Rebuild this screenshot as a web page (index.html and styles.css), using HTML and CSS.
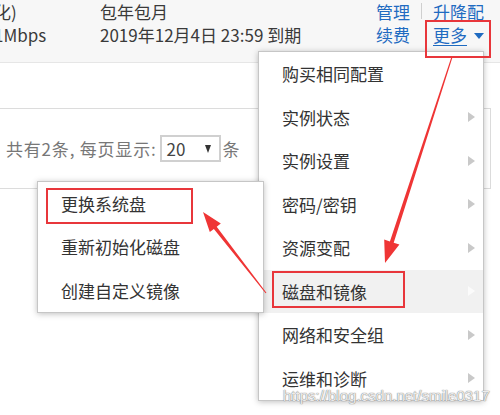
FILE: index.html
```html
<!DOCTYPE html>
<html lang="zh-CN">
<head>
<meta charset="utf-8">
<title>更多菜单</title>
<link rel="stylesheet" href="styles.css">
</head>
<body>
<div class="page">
  <div class="row">
    <div class="cell c1"><div class="clip">化)</div><div class="clip">1Mbps</div></div>
    <div class="cell c2"><div>包年包月</div><div>2019年12月4日 23:59 到期</div></div>
    <div class="cell c3"><a class="link">管理</a><a class="link">续费</a></div>
    <div class="sep"></div>
    <div class="cell c4"><a class="link">升降配</a><div class="morebox"><a class="link more">更多</a><span class="caret"></span></div></div>
  </div>
  <div class="blank"></div>
  <div class="pager">
    <span class="ptext">共有2条, 每页显示:</span>
    <span class="select"><span class="sval">20</span><span class="stri"></span></span>
    <span class="ptext">条</span>
  </div>
</div>

<ul class="menu main">
  <li class="item"><span>购买相同配置</span></li>
  <li class="item"><span>实例状态</span><i class="arr"></i></li>
  <li class="item"><span>实例设置</span><i class="arr"></i></li>
  <li class="item"><span>密码/密钥</span><i class="arr"></i></li>
  <li class="item"><span>资源变配</span><i class="arr"></i></li>
  <li class="item hover"><span>磁盘和镜像</span><i class="arr"></i><b class="mark mark-disk"></b></li>
  <li class="item"><span>网络和安全组</span><i class="arr"></i></li>
  <li class="item"><span>运维和诊断</span><i class="arr"></i></li>
</ul>

<ul class="menu sub">
  <li class="item"><span>更换系统盘</span><b class="mark mark-sys"></b></li>
  <li class="item"><span>重新初始化磁盘</span></li>
  <li class="item"><span>创建自定义镜像</span></li>
</ul>

<div class="mark mark-more"></div>

<svg class="arrows" width="500" height="415" viewBox="0 0 500 415">
  <polygon points="451.5,56.85 452.5,57.15 393.7,242.7 399.4,244.6 385,263 384.2,239.6 389.9,241.5" />
  <polygon points="265.6,293.3 266.4,292.7 216.7,226.7 220.8,223.5 203,212 209.8,232.1 213.9,228.9" />
</svg>

<div class="watermark">https://blog.csdn.net/smile0317</div>
</body>
</html>
```

FILE: styles.css
```css
* { box-sizing: border-box; }
html, body {
  margin: 0;
  padding: 0;
}
body {
  width: 500px;
  height: 415px;
  overflow: hidden;
  position: relative;
  background: #fff;
  font-family: "Noto Sans CJK SC", "Noto Sans", sans-serif;
  font-size: 17px;
  color: #3a3a3a;
}
.page {
  display: flex;
  flex-direction: column;
}
.row {
  display: flex;
  height: 63px;
  background: #f7f7f7;
  border-bottom: 1px solid #e6e6e6;
  line-height: 23px;
}
.cell {
  display: flex;
  flex-direction: column;
  white-space: nowrap;
}
.c1 { width: 100px; }
.clip { margin-left: -6px; }
.c2 { width: 276px; }
.c3 { width: 45px; }
.sep {
  width: 1px;
  height: 16px;
  margin-top: 3px;
  margin-right: 11px;
  background: #cfcfcf;
}
.c4 { flex: 1; }
.link {
  color: #1f6bc1;
  text-decoration: none;
}
.morebox {
  display: flex;
  align-items: center;
}
.more {
  text-decoration: underline;
  text-underline-offset: 3px;
}
.caret {
  width: 0;
  height: 0;
  margin-left: 7px;
  margin-top: 2px;
  border-left: 5px solid transparent;
  border-right: 5px solid transparent;
  border-top: 6px solid #1f6bc1;
}
.blank { height: 45px; }
.pager {
  width: 491px;
  height: 81px;
  border-top: 1px solid #dcdcdc;
  border-right: 1px solid #dcdcdc;
  border-bottom: 1px solid #dcdcdc;
  display: flex;
  align-items: center;
  padding-left: 6px;
  font-size: 17px;
  color: #777;
}
.ptext { letter-spacing: 0.8px; }
.select {
  display: flex;
  align-items: center;
  width: 61px;
  height: 27px;
  margin-left: 3px;
  margin-right: 2px;
  border: 2px solid #d0d0d0;
  padding-left: 5px;
  color: #444;
}
.sval { width: 38px; }
.stri {
  width: 0;
  height: 0;
  border-left: 3.5px solid transparent;
  border-right: 3.5px solid transparent;
  border-top: 8px solid #333;
}
.menu {
  position: absolute;
  margin: 0;
  padding: 0;
  list-style: none;
  background: #fff;
  border: 1px solid #c6c6c6;
  box-shadow: 0 1px 6px rgba(0, 0, 0, 0.25);
  color: #333;
}
.main {
  left: 258px;
  top: 51px;
  width: 226px;
}
.sub {
  left: 37px;
  top: 181px;
  width: 227px;
}
.item {
  position: relative;
  display: flex;
  align-items: center;
  justify-content: space-between;
  height: 43.5px;
  padding-left: 23px;
  padding-right: 8px;
  white-space: nowrap;
}
.sub .item { height: 43.33px; }
.item.hover { background: #f1f1f1; }
.arr {
  width: 0;
  height: 0;
  border-top: 5.5px solid transparent;
  border-bottom: 5.5px solid transparent;
  border-left: 7px solid #c9c9c9;
}
.hover .arr { border-left-color: #fbfbfb; }
.mark {
  position: absolute;
  border: 2px solid #e8363b;
  display: block;
}
.mark-disk {
  left: 13px;
  top: 1.5px;
  width: 133px;
  height: 37px;
}
.mark-sys {
  left: 8px;
  top: 6px;
  width: 147px;
  height: 36px;
}
.mark-more {
  left: 425px;
  top: 20px;
  width: 66px;
  height: 38px;
  z-index: 5;
}
.arrows {
  position: absolute;
  left: 0;
  top: 0;
  z-index: 6;
  fill: #ef3535;
}
.watermark {
  position: absolute;
  left: 283px;
  top: 388px;
  z-index: 7;
  font-family: "Liberation Sans", Arial, sans-serif;
  font-size: 15px;
  line-height: 15px;
  color: rgba(255, 255, 255, 0.85);
  text-shadow: 0 0 1px rgba(120, 120, 120, 0.9), 0 0 1px rgba(120, 120, 120, 0.9);
}
```
